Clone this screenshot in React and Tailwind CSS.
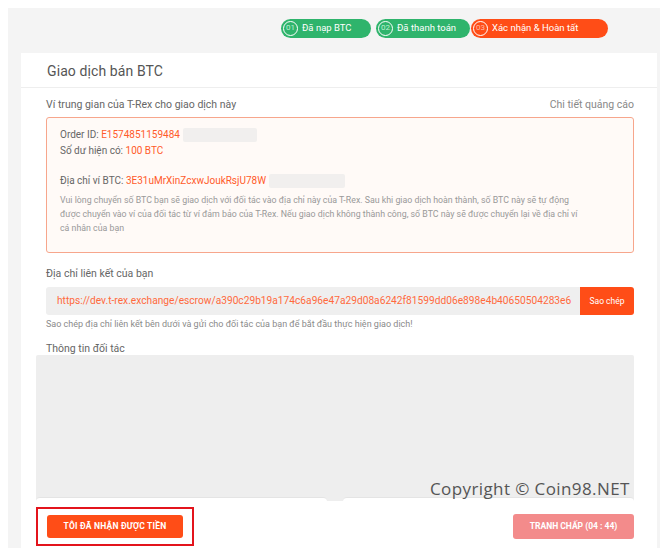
const ORANGE = "bg-[#ff4d17]";

function StepPill({ num, label, active, width }) {
  return (
    <div
      className={`flex items-center h-[19px] rounded-full pl-[2px] pr-3 gap-[4px] ${
        active ? "bg-[#ff4d17]" : "bg-[#2fb46c]"
      } ${width}`}
    >
      <span
        className={`w-[15px] h-[15px] rounded-full border-[1.5px] border-white flex items-center justify-center text-[8px] leading-none ${
          active ? "text-[#ffb9a4]" : "text-[#bdf0d2]"
        }`}
      >
        {num}
      </span>
      <span className="text-[9.5px] text-white leading-none">{label}</span>
    </div>
  );
}

function Redacted({ width }) {
  return <span className="inline-block h-[14px] bg-[#f1efee] rounded-[2px] blur-[0.5px] align-middle ml-[3px]" style={{ width }} />;
}

export default function App() {
  return (
    <div className="w-[664px] h-[550px] bg-white font-['Roboto',sans-serif] relative overflow-hidden">
      <div className="ml-[8px] mt-[8px] w-[652px] h-[540px] bg-[#f4f4f4] pl-[13px] pr-[3px] flex flex-col">
        {/* progress steps */}
        <div className="h-[45px] flex items-center pl-[260px] gap-[5px] pb-[5px]">
          <StepPill num="01" label="Đã nạp BTC" width="w-[90px]" />
          <StepPill num="02" label="Đã thanh toán" width="w-[94px]" />
          <StepPill num="03" label="Xác nhận & Hoàn tất" width="w-[137px] -ml-[4px]" active />
        </div>

        <div className="bg-white flex-1 flex flex-col">
          <div className="h-[35px] border-b border-[#eeeeee] flex items-center pl-[26px] pt-[2px]">
            <h1 className="text-[14px] text-[#555555] tracking-[0.1px]">Giao dịch bán BTC</h1>
          </div>

          <div className="pl-[25px] pr-[23px] pt-[10px] flex flex-col">
            <div className="flex justify-between items-center text-[10.5px] text-[#666666] h-[14px]">
              <span>Ví trung gian của T-Rex cho giao dịch này</span>
              <span className="text-[#888888]">Chi tiết quảng cáo</span>
            </div>

            <div className="mt-[5px] h-[136px] border border-[#f7a68c] bg-[#fffaf7] rounded-[3px] px-[13px] pt-[9px] text-[10px] text-[#666666]">
              <p className="leading-[16px]">
                Order ID: <span className="text-[#ff5a2a]">E1574851159484</span>
                <Redacted width={74} />
              </p>
              <p className="leading-[16px]">
                Số dư hiện có: <span className="text-[#ff5a2a]">100 BTC</span>
              </p>
              <p className="leading-[16px] mt-[14px]">
                Địa chỉ ví BTC: <span className="text-[#ff5a2a]">3E31uMrXinZcxwJoukRsjU78W</span>
                <Redacted width={76} />
              </p>
              <p className="mt-[4px] text-[8.8px] leading-[14px] text-[#999999] whitespace-nowrap">
                Vui lòng chuyển số BTC bạn sẽ giao dịch với đối tác vào địa chỉ này của T-Rex. Sau khi giao dịch hoàn thành, số BTC này sẽ tự động
                <br />
                được chuyển vào ví của đối tác từ ví đảm bảo của T-Rex. Nếu giao dịch không thành công, số BTC này sẽ được chuyển lại về địa chỉ ví
                <br />
                cá nhân của bạn
              </p>
            </div>

            <p className="mt-[14px] text-[10.5px] text-[#666666] leading-[14px]">Địa chỉ liên kết của bạn</p>
            <div className="mt-[6px] flex h-[28px]">
              <div className="flex-1 bg-[#efefef] rounded-l-[3px] flex items-center pl-[11px] overflow-hidden whitespace-nowrap text-[10.2px] text-[#ff6a3d]">
                https://dev.t-rex.exchange/escrow/a390c29b19a174c6a96e47a29d08a6242f81599dd06e898e4b40650504283e6
              </div>
              <button className={`${ORANGE} w-[54px] rounded-r-[3px] text-white text-[8.5px]`}>Sao chép</button>
            </div>
            <p className="mt-[3px] text-[9px] text-[#8a8a8a] leading-[12px]">
              Sao chép địa chỉ liên kết bên dưới và gửi cho đối tác của bạn để bắt đầu thực hiện giao dịch!
            </p>

            <p className="mt-[13px] text-[10.5px] text-[#666666] leading-[12px]">Thông tin đối tác</p>
          </div>

          {/* partner info block */}
          <div className="ml-[15px] mr-[23px] h-[146px] bg-[#eeeeee] rounded-t-[2px] flex flex-col justify-end">
            <div className="flex gap-[16px] h-[4px]">
              <div className="flex-1 bg-white rounded-t-[4px] border-t border-[#e4e4e4]" />
              <div className="flex-1 bg-white rounded-t-[4px] border-t border-[#e4e4e4]" />
            </div>
          </div>

          <div className="ml-[15px] mr-[23px] mt-[6px] flex justify-between items-start">
            <div className="border-2 border-[#e3141c] w-[158px] h-[39px] flex items-center justify-center">
              <button className={`${ORANGE} w-[136px] h-[23px] rounded-[3px] text-white text-[8.5px] font-bold tracking-[0.2px]`}>
                TÔI ĐÃ NHẬN ĐƯỢC TIỀN
              </button>
            </div>
            <button className="mt-[7px] bg-[#f38b8b] w-[121px] h-[25px] rounded-[3px] text-white text-[8.5px] font-bold">
              TRANH CHẤP (04 : 44)
            </button>
          </div>
        </div>
      </div>

      {/* watermark */}
      <span className="absolute left-[430px] top-[476px] text-[17px] text-[#555555] font-['Open_Sans',sans-serif] tracking-[0.4px]">
        Copyright © Coin98.NET
      </span>
    </div>
  );
}
